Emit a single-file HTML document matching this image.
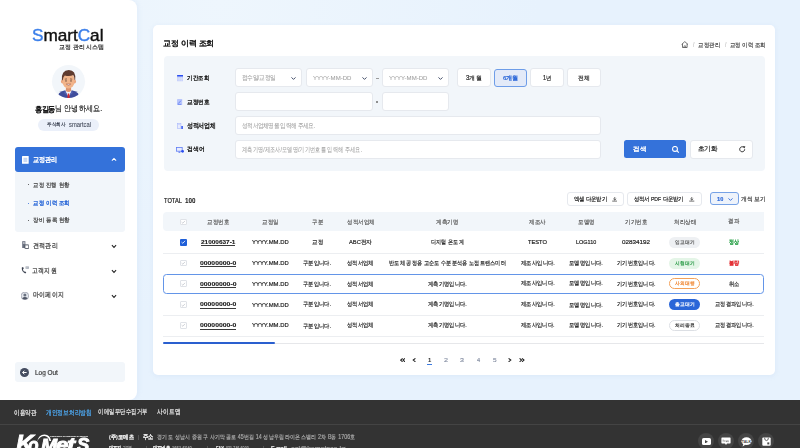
<!DOCTYPE html>
<html><head><meta charset="utf-8">
<style>
*{margin:0;padding:0;box-sizing:border-box}
html,body{width:800px;height:448px;overflow:hidden}
body{background:radial-gradient(circle 320px at 220px 0px,#eef6fd 0%,#e7f2fd 100%) #e7f2fd;font-family:"Liberation Sans",sans-serif;color:#222;position:relative}
.a{position:absolute}
.t{position:absolute;white-space:nowrap;line-height:1;transform-origin:0 0;will-change:transform}
</style></head><body>
<div class="a" style="left:0;top:0;width:137px;height:400px;background:#fff;border-radius:0 8px 8px 0;box-shadow:1px 0 5px rgba(160,190,230,.15)"></div>
<div class="t" style="left:32.35px;top:26.94px;font-size:166.02px;color:#111;font-weight:400;transform:scale(0.10328,0.1);-webkit-text-stroke:4.00px currentColor;"><span style="color:#3b7fea">S</span>mart<span style="color:#3b7fea">C</span>al</div>
<div class="t" style="left:59.26px;top:44.33px;font-size:60.63px;color:#2a2a2a;font-weight:400;transform:scale(0.09836,0.1);-webkit-text-stroke:2.00px currentColor;">교정 관리 시스템</div>
<div class="a" style="left:52.1px;top:64.5px;width:33px;height:33px;border-radius:50%;background:#f2f6fa;overflow:hidden">
<svg width="33" height="33" viewBox="0 0 33 33">
<path d="M5.5 33 L7 28.2 Q9.5 25.8 13.5 25.2 L19.5 25.2 Q23.5 25.8 26 28.2 L27.5 33 Z" fill="#3f4d9c"/>
<path d="M13 25.2 L16.5 32 L20 25.2 Z" fill="#f3f4f8"/>
<path d="M13 25.2 L15.2 30.5 L12.2 28 Z M20 25.2 L17.8 30.5 L20.8 28 Z" fill="#5564b4"/>
<path d="M15.8 28.6 L17.2 28.6 L17.7 33 L15.3 33 Z" fill="#d8282c"/>
<path d="M14 21.5 L19 21.5 L19.2 26 Q16.5 28 13.8 26 Z" fill="#dc9470"/>
<ellipse cx="10.4" cy="16.4" rx="1.4" ry="2" fill="#e9a27a"/>
<ellipse cx="22.6" cy="16.4" rx="1.4" ry="2" fill="#e9a27a"/>
<ellipse cx="16.5" cy="15.8" rx="6.2" ry="7.7" fill="#f1b48a"/>
<path d="M9.9 15.2 Q9 5.2 16.8 4.9 Q24.2 5.1 23.2 14.8 L22.6 15 Q22.4 11.4 21.2 10 Q17.6 11.8 12.8 10.4 Q11.2 11.6 10.7 15.2 Z" fill="#5f3b2f"/>
<path d="M12.8 14.2 L15 13.9 M18 13.9 L20.2 14.2" stroke="#4a2e24" stroke-width="0.6"/>
<circle cx="14" cy="15.9" r="0.65" fill="#3a2a22"/><circle cx="19" cy="15.9" r="0.65" fill="#3a2a22"/>
<path d="M14.3 19.1 Q16.5 21.6 18.7 19.1 Z" fill="#fff" stroke="#8a3a2a" stroke-width="0.45"/>
</svg></div>
<div class="t" style="left:34.58px;top:105.63px;font-size:75.37px;color:#1a1a1a;font-weight:700;transform:scale(0.08978,0.1);-webkit-text-stroke:1.50px currentColor;">홍길동</div>
<div class="t" style="left:55.27px;top:104.17px;font-size:81.81px;color:#222;font-weight:400;transform:scale(0.08800,0.1);-webkit-text-stroke:1.60px currentColor;">님 안녕하세요.</div>
<div class="a" style="left:38px;top:119px;width:61px;height:11.5px;border-radius:6px;background:#ebf0fa"></div>
<div class="t" style="left:47.07px;top:122.38px;font-size:51.23px;color:#3a4152;font-weight:400;transform:scale(0.09060,0.1);-webkit-text-stroke:2.00px currentColor;">주식회사</div>
<div class="t" style="left:68.58px;top:122.21px;font-size:64.78px;color:#3a4152;font-weight:400;transform:scale(0.09023,0.1);-webkit-text-stroke:0.50px currentColor;">smartcal</div>
<div class="a" style="left:14.6px;top:147.3px;width:110px;height:24.4px;background:#3472da;border-radius:3px"></div>
<svg class="a" style="left:21.9px;top:155.9px" width="7" height="8" viewBox="0 0 7 8"><rect x="0" y="0" width="6.7" height="7.85" rx="0.6" fill="#fff"/><rect x="1.4" y="1.6" width="3.9" height="4.6" fill="#dfe8f8"/><path d="M1.6 2.6 H5.1 M1.6 3.9 H5.1 M1.6 5.2 H5.1" stroke="#9db8ea" stroke-width="0.45"/></svg>
<div class="t" style="left:33.12px;top:155.83px;font-size:69.86px;color:#fff;font-weight:700;transform:scale(0.08706,0.1);-webkit-text-stroke:0.60px currentColor;">교정관리</div>
<svg class="a" style="left:110.5px;top:157.3px" width="6" height="5" viewBox="0 0 6 5"><path d="M0.9 3.6 L3 1.4 L5.1 3.6" stroke="#fff" stroke-width="1.05" fill="none"/></svg>
<div class="a" style="left:14.6px;top:171.7px;width:110px;height:60.3px;background:#f2f6fa;border-radius:0 0 3px 3px"></div>
<div class="a" style="left:27.8px;top:184.30px;width:1px;height:1px;border-radius:50%;background:#3a3a3a"></div>
<div class="t" style="left:32.73px;top:181.73px;font-size:63.96px;color:#3a3a3a;font-weight:400;transform:scale(0.08817,0.1);-webkit-text-stroke:2.00px currentColor;">교정 진행 현황</div>
<div class="a" style="left:27.8px;top:202.50px;width:1px;height:1px;border-radius:50%;background:#2f6bd8"></div>
<div class="t" style="left:32.73px;top:199.52px;font-size:64.36px;color:#2f6bd8;font-weight:700;transform:scale(0.08831,0.1);-webkit-text-stroke:0.60px currentColor;">교정 이력 조회</div>
<div class="a" style="left:27.8px;top:219.65px;width:1px;height:1px;border-radius:50%;background:#3a3a3a"></div>
<div class="t" style="left:32.74px;top:216.81px;font-size:63.25px;color:#3a3a3a;font-weight:400;transform:scale(0.08974,0.1);-webkit-text-stroke:2.00px currentColor;">장비 등록 현황</div>
<svg class="a" style="left:21.6px;top:241.2px" width="7" height="8" viewBox="0 0 7 8"><rect x="0.2" y="0.2" width="3.2" height="6.8" fill="#6a7180"/><rect x="0.9" y="1" width="1.8" height="0.5" fill="#fff"/><rect x="0.9" y="2.2" width="1.8" height="0.5" fill="#fff"/><rect x="2.9" y="3.9" width="3.9" height="3.7" rx="0.4" fill="#fff" stroke="#444b58" stroke-width="0.9"/></svg>
<div class="t" style="left:32.80px;top:241.58px;font-size:71.92px;color:#333;font-weight:400;transform:scale(0.08578,0.1);-webkit-text-stroke:2.00px currentColor;">견적관리</div>
<svg class="a" style="left:21.3px;top:266.2px" width="8" height="8" viewBox="0 0 8 8"><path d="M0.8 1.6 Q0.3 5.4 4.2 7.6 L5.3 6.5 L3.9 5.2 L3.1 5.8 Q2 4.6 2 3.3 L2.8 2.6 L2.1 1 Z" fill="#3b4150"/><rect x="4.6" y="0.4" width="3.2" height="2.4" fill="#9aa1ad"/><path d="M5.1 1.2 H7.3 M5.1 2 H6.6" stroke="#fff" stroke-width="0.35"/></svg>
<div class="t" style="left:32.15px;top:266.59px;font-size:73.85px;color:#333;font-weight:400;transform:scale(0.08439,0.1);-webkit-text-stroke:2.00px currentColor;">고객지원</div>
<svg class="a" style="left:21.2px;top:291.6px" width="8" height="8" viewBox="0 0 8 8"><circle cx="3.9" cy="3.9" r="3.8" fill="#e5e8ee" stroke="#6c7382" stroke-width="0.5"/><circle cx="3.9" cy="3.1" r="1.5" fill="#6c7382"/><path d="M1.1 6.2 Q3.9 3.6 6.7 6.2 Q3.9 8.6 1.1 6.2 Z" fill="#4f5666"/></svg>
<div class="t" style="left:33.24px;top:291.36px;font-size:73.28px;color:#333;font-weight:400;transform:scale(0.08479,0.1);-webkit-text-stroke:2.00px currentColor;">마이페이지</div>
<svg class="a" style="left:110.5px;top:243.5px" width="6" height="5" viewBox="0 0 6 5"><path d="M0.9 1.2 L3 3.4 L5.1 1.2" stroke="#222" stroke-width="1.05" fill="none"/></svg>
<svg class="a" style="left:110.5px;top:268.6px" width="6" height="5" viewBox="0 0 6 5"><path d="M0.9 1.2 L3 3.4 L5.1 1.2" stroke="#222" stroke-width="1.05" fill="none"/></svg>
<svg class="a" style="left:110.5px;top:293.8px" width="6" height="5" viewBox="0 0 6 5"><path d="M0.9 1.2 L3 3.4 L5.1 1.2" stroke="#222" stroke-width="1.05" fill="none"/></svg>
<div class="a" style="left:15px;top:362.3px;width:109.5px;height:20.2px;background:#f2f6fa;border-radius:3px"></div>
<svg class="a" style="left:20.1px;top:367.9px" width="9" height="9" viewBox="0 0 9 9"><circle cx="4.5" cy="4.5" r="4.5" fill="#454d60"/><path d="M6.6 4.5 H2.8 M4.4 2.7 L2.6 4.5 L4.4 6.3" stroke="#fff" stroke-width="1" fill="none"/></svg>
<div class="t" style="left:34.92px;top:368.95px;font-size:65.89px;color:#3a3a3a;font-weight:400;transform:scale(0.09745,0.1);-webkit-text-stroke:2.00px currentColor;">Log Out</div>
<div class="a" style="left:153.2px;top:24.7px;width:621.8px;height:350.3px;background:#fff;border-radius:5px;box-shadow:0 1px 5px rgba(160,190,230,.18)"></div>
<div class="t" style="left:163.21px;top:38.52px;font-size:79.07px;color:#111;font-weight:700;transform:scale(0.09908,0.1);-webkit-text-stroke:0.60px currentColor;">교정 이력 조회</div>
<svg class="a" style="left:680.6px;top:41.1px" width="8" height="7" viewBox="0 0 8 7"><path d="M0.6 3.5 L3.8 0.6 L7 3.5 M1.5 2.8 V6.5 H6.1 V2.8" stroke="#444" stroke-width="0.75" fill="none"/><path d="M3 6.5 V4.9 H4.6 V6.5" stroke="#444" stroke-width="0.6" fill="none"/></svg>
<div class="t" style="left:692.71px;top:40.53px;font-size:72.56px;color:#c4c4c4;font-weight:400;transform:scale(0.06829,0.1);-webkit-text-stroke:2.00px currentColor;">/</div>
<div class="t" style="left:698.23px;top:41.65px;font-size:63.18px;color:#4a4a4a;font-weight:400;transform:scale(0.08841,0.1);-webkit-text-stroke:2.00px currentColor;">교정관리</div>
<div class="t" style="left:725.21px;top:40.53px;font-size:72.56px;color:#c4c4c4;font-weight:400;transform:scale(0.06829,0.1);-webkit-text-stroke:2.00px currentColor;">/</div>
<div class="t" style="left:730.45px;top:41.69px;font-size:60.57px;color:#4a4a4a;font-weight:400;transform:scale(0.08847,0.1);-webkit-text-stroke:2.00px currentColor;">교정 이력 조회</div>
<div class="a" style="left:163.5px;top:55.8px;width:601.3px;height:114.8px;background:#f2f6fa;border-radius:4px"></div>
<svg class="a" style="left:176.9px;top:75.4px" width="6.4" height="6.2" viewBox="0 0 6.4 6.2"><rect x="0" y="0" width="6.4" height="6.2" rx="0.5" fill="#c5cffb"/><rect x="0" y="0" width="6.4" height="1.6" rx="0.5" fill="#2c4ff0"/><path d="M0.3 3.4 H6.1 M0.3 4.8 H6.1 M2.1 1.8 V6 M4.3 1.8 V6" stroke="#e6ebfd" stroke-width="0.4"/></svg>
<div class="t" style="left:186.77px;top:75.08px;font-size:64.52px;color:#1e1e1e;font-weight:700;transform:scale(0.08777,0.1);-webkit-text-stroke:0.60px currentColor;">기간조회</div>
<svg class="a" style="left:177.4px;top:98.7px" width="5.2" height="6.2" viewBox="0 0 5.2 6.2"><rect x="0" y="0" width="5.2" height="6.2" rx="0.4" fill="#b9c6fb"/><path d="M1.2 4.6 L3.9 1.7" stroke="#5574f2" stroke-width="0.8"/><rect x="0.9" y="4.9" width="3.4" height="0.7" fill="#5574f2"/></svg>
<div class="t" style="left:187.07px;top:99.19px;font-size:60.56px;color:#1e1e1e;font-weight:700;transform:scale(0.09398,0.1);-webkit-text-stroke:0.60px currentColor;">교정번호</div>
<svg class="a" style="left:176.9px;top:123.1px" width="6.4" height="6" viewBox="0 0 6.4 6"><rect x="0.3" y="0.3" width="3.6" height="5.4" fill="#e8ecfd" stroke="#a9b8fb" stroke-width="0.6"/><rect x="4.2" y="3" width="2.2" height="3" fill="#4d6df2"/><rect x="1.2" y="1.4" width="1.6" height="0.5" fill="#a9b8fb"/></svg>
<div class="t" style="left:186.89px;top:122.23px;font-size:66.11px;color:#1e1e1e;font-weight:700;transform:scale(0.08546,0.1);-webkit-text-stroke:0.60px currentColor;">성적서업체</div>
<svg class="a" style="left:175.7px;top:146.5px" width="8.2" height="6" viewBox="0 0 8.2 6"><rect x="0.4" y="0.4" width="5.8" height="3.8" fill="#e8ecfd" stroke="#5f7cf3" stroke-width="0.8"/><rect x="2.5" y="4.6" width="1.8" height="1.2" fill="#5f7cf3"/><circle cx="6.6" cy="4.3" r="1.4" fill="#2c4ff0"/></svg>
<div class="t" style="left:186.70px;top:146.45px;font-size:60.98px;color:#1e1e1e;font-weight:700;transform:scale(0.09655,0.1);-webkit-text-stroke:0.60px currentColor;">검색어</div>
<div class="a" style="left:235.10px;top:68.40px;width:67.10px;height:18.80px;background:#fff;border:1px solid #e6e9ee;border-radius:3px;"></div>
<div class="t" style="left:242.05px;top:74.60px;font-size:65.41px;color:#a0a0a0;font-weight:400;transform:scale(0.08092,0.1);-webkit-text-stroke:0.60px currentColor;">접수일/교정일</div>
<svg class="a" style="left:291.0px;top:76.5px" width="5" height="3" viewBox="0 0 5 3"><path d="M0.5 0.4 L2.5 2.4 L4.5 0.4" stroke="#2f3a58" stroke-width="0.9" fill="none"/></svg>
<div class="a" style="left:306.30px;top:68.40px;width:66.60px;height:18.80px;background:#fff;border:1px solid #e6e9ee;border-radius:3px;"></div>
<div class="t" style="left:312.94px;top:74.86px;font-size:62.74px;color:#a0a0a0;font-weight:400;transform:scale(0.09656,0.1);-webkit-text-stroke:0.60px currentColor;">YYYY-MM-DD</div>
<svg class="a" style="left:362.0px;top:76.5px" width="5" height="3" viewBox="0 0 5 3"><path d="M0.5 0.4 L2.5 2.4 L4.5 0.4" stroke="#2f3a58" stroke-width="0.9" fill="none"/></svg>
<div class="a" style="left:375.6px;top:77.8px;width:3.2px;height:0.8px;background:#9a9a9a"></div>
<div class="a" style="left:382.30px;top:68.40px;width:66.60px;height:18.80px;background:#fff;border:1px solid #e6e9ee;border-radius:3px;"></div>
<div class="t" style="left:388.95px;top:74.86px;font-size:62.74px;color:#a0a0a0;font-weight:400;transform:scale(0.09653,0.1);-webkit-text-stroke:0.60px currentColor;">YYYY-MM-DD</div>
<svg class="a" style="left:438.0px;top:76.5px" width="5" height="3" viewBox="0 0 5 3"><path d="M0.5 0.4 L2.5 2.4 L4.5 0.4" stroke="#2f3a58" stroke-width="0.9" fill="none"/></svg>
<div class="a" style="left:457.00px;top:68.30px;width:33.50px;height:18.80px;background:#fff;border:1px solid #e6e9ee;border-radius:3px;"></div>
<div class="t" style="left:465.60px;top:75.35px;font-size:63.00px;color:#2a2a2a;font-weight:400;transform:scale(0.09767,0.1);-webkit-text-stroke:2.00px currentColor;">3개월</div>
<div class="a" style="left:493.8px;top:68.8px;width:33px;height:17.8px;background:#e3eaf8;border:1px solid #6e9de8;border-radius:3px"></div>
<div class="t" style="left:503.21px;top:74.50px;font-size:60.31px;color:#2d68d8;font-weight:700;transform:scale(0.10030,0.1);-webkit-text-stroke:0.60px currentColor;">6개월</div>
<div class="a" style="left:530.00px;top:68.30px;width:33.70px;height:18.80px;background:#fff;border:1px solid #e6e9ee;border-radius:3px;"></div>
<div class="t" style="left:543.16px;top:74.57px;font-size:63.20px;color:#2a2a2a;font-weight:400;transform:scale(0.08759,0.1);-webkit-text-stroke:2.00px currentColor;">1년</div>
<div class="a" style="left:567.00px;top:68.30px;width:33.70px;height:18.80px;background:#fff;border:1px solid #e6e9ee;border-radius:3px;"></div>
<div class="t" style="left:577.98px;top:74.59px;font-size:62.94px;color:#2a2a2a;font-weight:400;transform:scale(0.09804,0.1);-webkit-text-stroke:2.00px currentColor;">전체</div>
<div class="a" style="left:235.10px;top:92.00px;width:137.80px;height:19.30px;background:#fff;border:1px solid #e6e9ee;border-radius:3px;"></div>
<div class="a" style="left:376.4px;top:101.2px;width:1.9px;height:1.5px;background:#8f8f8f"></div>
<div class="a" style="left:382.30px;top:92.00px;width:66.60px;height:19.30px;background:#fff;border:1px solid #e6e9ee;border-radius:3px;"></div>
<div class="a" style="left:235.10px;top:116.00px;width:365.60px;height:18.80px;background:#fff;border:1px solid #e6e9ee;border-radius:3px;"></div>
<div class="t" style="left:241.74px;top:123.17px;font-size:65.51px;color:#a0a0a0;font-weight:400;transform:scale(0.08016,0.1);-webkit-text-stroke:0.60px currentColor;">성적서업체명을 입력해 주세요.</div>
<div class="a" style="left:235.10px;top:139.70px;width:365.60px;height:18.90px;background:#fff;border:1px solid #e6e9ee;border-radius:3px;"></div>
<div class="t" style="left:242.28px;top:146.12px;font-size:72.79px;color:#a0a0a0;font-weight:400;transform:scale(0.07268,0.1);-webkit-text-stroke:0.60px currentColor;">계측기명/제조사/모델명/기기번호를 입력해 주세요.</div>
<div class="a" style="left:624.2px;top:140px;width:62.2px;height:18.2px;background:#3472da;border-radius:2.5px"></div>
<div class="t" style="left:632.67px;top:145.80px;font-size:63.18px;color:#fff;font-weight:700;transform:scale(0.10751,0.1);-webkit-text-stroke:0.60px currentColor;">검색</div>
<svg class="a" style="left:672.0px;top:146.3px" width="7.4" height="7" viewBox="0 0 7.4 7"><circle cx="3" cy="2.9" r="2.45" stroke="#fff" stroke-width="1.1" fill="none"/><path d="M4.8 4.7 L6.8 6.6" stroke="#fff" stroke-width="1.1"/></svg>
<div class="a" style="left:690.00px;top:139.50px;width:62.50px;height:19.20px;background:#fff;border:1px solid #e6e9ee;border-radius:3px;"></div>
<div class="t" style="left:698.02px;top:145.47px;font-size:67.60px;color:#222;font-weight:400;transform:scale(0.09404,0.1);-webkit-text-stroke:2.00px currentColor;">초기화</div>
<svg class="a" style="left:738.5px;top:146.4px" width="7" height="6.4" viewBox="0 0 7 6.4"><path d="M5.7 3.3 A2.5 2.5 0 1 1 4.6 1.2" stroke="#222" stroke-width="0.95" fill="none"/><path d="M3.9 0 L6.4 0.6 L5.2 2.6 Z" fill="#222"/></svg>
<div class="t" style="left:164.38px;top:198.49px;font-size:64.90px;color:#222;font-weight:400;transform:scale(0.08832,0.1);-webkit-text-stroke:2.00px currentColor;">TOTAL</div>
<div class="t" style="left:184.78px;top:198.19px;font-size:64.90px;color:#222;font-weight:700;transform:scale(0.09730,0.1);-webkit-text-stroke:0.60px currentColor;">100</div>
<div class="a" style="left:566.70px;top:192.00px;width:57.30px;height:13.50px;background:#fff;border:1px solid #e6e9ee;border-radius:3px;"></div>
<div class="t" style="left:573.67px;top:195.86px;font-size:58.62px;color:#222;font-weight:400;transform:scale(0.08896,0.1);-webkit-text-stroke:2.00px currentColor;">엑셀 다운받기</div>
<svg class="a" style="left:611.5px;top:197.4px" width="5.5" height="4.5" viewBox="0 0 5.5 4.5"><path d="M2.75 0 V3 M1.3 1.7 L2.75 3.1 L4.2 1.7 M0.2 4.1 H5.3" stroke="#333" stroke-width="0.7" fill="none"/></svg>
<div class="a" style="left:627.00px;top:192.00px;width:74.50px;height:13.50px;background:#fff;border:1px solid #e6e9ee;border-radius:3px;"></div>
<div class="t" style="left:633.76px;top:195.61px;font-size:58.55px;color:#222;font-weight:400;transform:scale(0.08746,0.1);-webkit-text-stroke:2.00px currentColor;">성적서 PDF 다운받기</div>
<svg class="a" style="left:689.2px;top:197.4px" width="5.5" height="4.5" viewBox="0 0 5.5 4.5"><path d="M2.75 0 V3 M1.3 1.7 L2.75 3.1 L4.2 1.7 M0.2 4.1 H5.3" stroke="#333" stroke-width="0.7" fill="none"/></svg>
<div class="a" style="left:710px;top:192.2px;width:28.5px;height:13px;background:#eef3fb;border:1px solid #76a2e6;border-radius:3px"></div>
<div class="t" style="left:716.68px;top:195.75px;font-size:62.11px;color:#2d68d8;font-weight:700;transform:scale(0.09309,0.1);-webkit-text-stroke:2.00px currentColor;">10</div>
<svg class="a" style="left:727.5px;top:198.3px" width="5" height="3" viewBox="0 0 5 3"><path d="M0.5 0.4 L2.5 2.4 L4.5 0.4" stroke="#2d68d8" stroke-width="0.9" fill="none"/></svg>
<div class="t" style="left:741.11px;top:195.66px;font-size:59.66px;color:#444;font-weight:400;transform:scale(0.09659,0.1);-webkit-text-stroke:2.00px currentColor;">개씩 보기</div>
<div class="a" style="left:163.3px;top:212px;width:600.7px;height:19.4px;background:#f2f6fa;border-radius:4px 0 0 4px"></div>
<div class="a" style="left:180.00px;top:218.50px;width:6.8px;height:6.8px;background:#fff;border:0.6px solid #dfe2e7;border-radius:1px"></div>
<svg class="a" style="left:181.10px;top:219.80px" width="4.6" height="4.2" viewBox="0 0 4.6 4.2"><path d="M0.6 2.1 L1.8 3.2 L4 0.9" stroke="#a8adb6" stroke-width="0.55" fill="none"/></svg>
<div class="t" style="left:206.79px;top:219.07px;font-size:62.00px;color:#5c5c5c;font-weight:400;transform:scale(0.09000,0.1);-webkit-text-stroke:2.00px currentColor;">교정번호</div>
<div class="t" style="left:262.27px;top:218.69px;font-size:62.00px;color:#5c5c5c;font-weight:400;transform:scale(0.09000,0.1);-webkit-text-stroke:2.00px currentColor;">교정일</div>
<div class="t" style="left:311.99px;top:219.01px;font-size:62.00px;color:#5c5c5c;font-weight:400;transform:scale(0.09000,0.1);-webkit-text-stroke:2.00px currentColor;">구분</div>
<div class="t" style="left:347.05px;top:218.88px;font-size:62.00px;color:#5c5c5c;font-weight:400;transform:scale(0.09000,0.1);-webkit-text-stroke:2.00px currentColor;">성적서업체</div>
<div class="t" style="left:436.35px;top:218.97px;font-size:62.00px;color:#5c5c5c;font-weight:400;transform:scale(0.09000,0.1);-webkit-text-stroke:2.00px currentColor;">계측기명</div>
<div class="t" style="left:529.43px;top:218.69px;font-size:62.00px;color:#5c5c5c;font-weight:400;transform:scale(0.09000,0.1);-webkit-text-stroke:2.00px currentColor;">제조사</div>
<div class="t" style="left:577.94px;top:218.61px;font-size:62.00px;color:#5c5c5c;font-weight:400;transform:scale(0.09000,0.1);-webkit-text-stroke:2.00px currentColor;">모델명</div>
<div class="t" style="left:624.88px;top:219.07px;font-size:62.00px;color:#5c5c5c;font-weight:400;transform:scale(0.09000,0.1);-webkit-text-stroke:2.00px currentColor;">기기번호</div>
<div class="t" style="left:674.21px;top:218.91px;font-size:62.00px;color:#5c5c5c;font-weight:400;transform:scale(0.09000,0.1);-webkit-text-stroke:2.00px currentColor;">처리상태</div>
<div class="t" style="left:728.46px;top:218.30px;font-size:62.00px;color:#5c5c5c;font-weight:400;transform:scale(0.09000,0.1);-webkit-text-stroke:2.00px currentColor;">결과</div>
<div class="a" style="left:163.3px;top:252.5px;width:600.7px;height:0.7px;background:#eceef1"></div>
<div class="a" style="left:163.3px;top:314.9px;width:600.7px;height:0.7px;background:#eceef1"></div>
<div class="a" style="left:163.3px;top:335.6px;width:600.7px;height:0.7px;background:#eceef1"></div>
<div class="a" style="left:163.3px;top:273.5px;width:600.7px;height:20.4px;border:1px solid #6395e8;border-radius:3.5px"></div>
<div class="a" style="left:180.00px;top:239.30px;width:6.8px;height:6.4px;background:#1f5fd8;border-radius:1px"></div>
<svg class="a" style="left:181.10px;top:240.30px" width="4.6" height="4.2" viewBox="0 0 4.6 4.2"><path d="M0.5 2.1 L1.8 3.3 L4.1 0.8" stroke="#fff" stroke-width="0.8" fill="none"/></svg>
<div class="t" style="left:201.31px;top:239.42px;font-size:60.91px;color:#1a1a1a;font-weight:600;transform:scale(0.10580,0.1);-webkit-text-stroke:1.20px currentColor;">21000637-1</div>
<div class="a" style="left:200.88px;top:245.40px;width:34.25px;height:0.55px;background:#3a3a3a"></div>
<div class="t" style="left:251.68px;top:239.32px;font-size:62.67px;color:#222;font-weight:400;transform:scale(0.09451,0.1);-webkit-text-stroke:2.00px currentColor;">YYYY.MM.DD</div>
<div class="t" style="left:311.88px;top:239.19px;font-size:62.00px;color:#2a2a2a;font-weight:400;transform:scale(0.08998,0.1);-webkit-text-stroke:2.00px currentColor;">교정</div>
<div class="t" style="left:349.02px;top:239.16px;font-size:62.00px;color:#2a2a2a;font-weight:400;transform:scale(0.09231,0.1);-webkit-text-stroke:2.00px currentColor;">ABC전자</div>
<div class="t" style="left:430.93px;top:239.13px;font-size:62.00px;color:#2a2a2a;font-weight:400;transform:scale(0.08418,0.1);-webkit-text-stroke:2.00px currentColor;">디지털 온도계</div>
<div class="t" style="left:528.07px;top:238.98px;font-size:60.91px;color:#222;font-weight:400;transform:scale(0.09336,0.1);-webkit-text-stroke:2.00px currentColor;">TESTO</div>
<div class="t" style="left:575.74px;top:239.42px;font-size:60.91px;color:#222;font-weight:400;transform:scale(0.08949,0.1);-webkit-text-stroke:2.00px currentColor;">LOG110</div>
<div class="t" style="left:621.94px;top:239.42px;font-size:60.91px;color:#222;font-weight:400;transform:scale(0.10319,0.1);-webkit-text-stroke:2.00px currentColor;">02834192</div>
<div class="a" style="left:669.40px;top:237.10px;width:30.4px;height:10.8px;border-radius:5.4px;background:#eef0f3;"></div>
<div class="t" style="left:674.84px;top:239.40px;font-size:54.00px;color:#555;font-weight:400;transform:scale(0.09481,0.1);-webkit-text-stroke:2.00px currentColor;">입고대기</div>
<div class="t" style="left:729.04px;top:238.85px;font-size:62.00px;color:#2ca24a;font-weight:700;transform:scale(0.08311,0.1);-webkit-text-stroke:0.60px currentColor;">정상</div>
<div class="a" style="left:180.00px;top:259.70px;width:6.8px;height:6.8px;background:#fff;border:0.6px solid #dfe2e7;border-radius:1px"></div>
<svg class="a" style="left:181.10px;top:261.00px" width="4.6" height="4.2" viewBox="0 0 4.6 4.2"><path d="M0.6 2.1 L1.8 3.2 L4 0.9" stroke="#a8adb6" stroke-width="0.55" fill="none"/></svg>
<div class="t" style="left:199.62px;top:259.66px;font-size:60.91px;color:#1a1a1a;font-weight:600;transform:scale(0.11191,0.1);-webkit-text-stroke:1.20px currentColor;">00000000-0</div>
<div class="a" style="left:199.75px;top:266.10px;width:36.50px;height:0.55px;background:#3a3a3a"></div>
<div class="t" style="left:251.68px;top:260.12px;font-size:62.67px;color:#222;font-weight:400;transform:scale(0.09451,0.1);-webkit-text-stroke:2.00px currentColor;">YYYY.MM.DD</div>
<div class="t" style="left:303.15px;top:259.64px;font-size:62.00px;color:#2a2a2a;font-weight:400;transform:scale(0.08648,0.1);-webkit-text-stroke:2.00px currentColor;">구분입니다.</div>
<div class="t" style="left:346.94px;top:260.02px;font-size:62.00px;color:#2a2a2a;font-weight:400;transform:scale(0.08651,0.1);-webkit-text-stroke:2.00px currentColor;">성적서업체</div>
<div class="t" style="left:389.04px;top:259.99px;font-size:62.00px;color:#2a2a2a;font-weight:400;transform:scale(0.08536,0.1);-webkit-text-stroke:2.00px currentColor;">반도체 공정용 고순도 수분분석용 노점트랜스미터</div>
<div class="t" style="left:520.69px;top:260.19px;font-size:62.00px;color:#2a2a2a;font-weight:400;transform:scale(0.08681,0.1);-webkit-text-stroke:2.00px currentColor;">제조사입니다.</div>
<div class="t" style="left:568.91px;top:260.14px;font-size:62.00px;color:#2a2a2a;font-weight:400;transform:scale(0.08702,0.1);-webkit-text-stroke:2.00px currentColor;">모델명입니다.</div>
<div class="t" style="left:616.71px;top:259.62px;font-size:62.00px;color:#2a2a2a;font-weight:400;transform:scale(0.08516,0.1);-webkit-text-stroke:2.00px currentColor;">기기번호입니다.</div>
<div class="a" style="left:669.40px;top:257.80px;width:30.4px;height:10.8px;border-radius:5.4px;background:#e4f5e7;"></div>
<div class="t" style="left:675.15px;top:259.50px;font-size:54.00px;color:#2a9a46;font-weight:400;transform:scale(0.09478,0.1);-webkit-text-stroke:2.00px currentColor;">시험대기</div>
<div class="t" style="left:729.04px;top:259.61px;font-size:62.00px;color:#e2262b;font-weight:700;transform:scale(0.08462,0.1);-webkit-text-stroke:0.60px currentColor;">불량</div>
<div class="a" style="left:180.00px;top:280.30px;width:6.8px;height:6.8px;background:#fff;border:0.6px solid #dfe2e7;border-radius:1px"></div>
<svg class="a" style="left:181.10px;top:281.60px" width="4.6" height="4.2" viewBox="0 0 4.6 4.2"><path d="M0.6 2.1 L1.8 3.2 L4 0.9" stroke="#a8adb6" stroke-width="0.55" fill="none"/></svg>
<div class="t" style="left:199.77px;top:280.50px;font-size:60.91px;color:#1a1a1a;font-weight:600;transform:scale(0.11211,0.1);-webkit-text-stroke:1.20px currentColor;">00000000-0</div>
<div class="a" style="left:199.75px;top:286.70px;width:36.50px;height:0.55px;background:#3a3a3a"></div>
<div class="t" style="left:251.68px;top:280.52px;font-size:62.67px;color:#222;font-weight:400;transform:scale(0.09451,0.1);-webkit-text-stroke:2.00px currentColor;">YYYY.MM.DD</div>
<div class="t" style="left:303.05px;top:280.60px;font-size:62.00px;color:#2a2a2a;font-weight:400;transform:scale(0.08534,0.1);-webkit-text-stroke:2.00px currentColor;">구분입니다.</div>
<div class="t" style="left:346.94px;top:280.51px;font-size:62.00px;color:#2a2a2a;font-weight:400;transform:scale(0.08649,0.1);-webkit-text-stroke:2.00px currentColor;">성적서업체</div>
<div class="t" style="left:428.16px;top:280.69px;font-size:62.00px;color:#2a2a2a;font-weight:400;transform:scale(0.08560,0.1);-webkit-text-stroke:2.00px currentColor;">계측기명입니다.</div>
<div class="t" style="left:520.84px;top:280.24px;font-size:62.00px;color:#2a2a2a;font-weight:400;transform:scale(0.08639,0.1);-webkit-text-stroke:2.00px currentColor;">제조사입니다.</div>
<div class="t" style="left:568.91px;top:280.26px;font-size:62.00px;color:#2a2a2a;font-weight:400;transform:scale(0.08702,0.1);-webkit-text-stroke:2.00px currentColor;">모델명입니다.</div>
<div class="t" style="left:616.71px;top:281.02px;font-size:62.00px;color:#2a2a2a;font-weight:400;transform:scale(0.08516,0.1);-webkit-text-stroke:2.00px currentColor;">기기번호입니다.</div>
<div class="a" style="left:669.40px;top:278.40px;width:30.4px;height:10.8px;border-radius:5.4px;background:#fff;border:0.8px solid #f3a15a;"></div>
<div class="t" style="left:675.24px;top:280.30px;font-size:54.00px;color:#ee7d22;font-weight:400;transform:scale(0.09453,0.1);-webkit-text-stroke:2.00px currentColor;">사외대행</div>
<div class="t" style="left:728.73px;top:280.64px;font-size:62.00px;color:#333;font-weight:400;transform:scale(0.08813,0.1);-webkit-text-stroke:2.00px currentColor;">취소</div>
<div class="a" style="left:180.00px;top:301.20px;width:6.8px;height:6.8px;background:#fff;border:0.6px solid #dfe2e7;border-radius:1px"></div>
<svg class="a" style="left:181.10px;top:302.50px" width="4.6" height="4.2" viewBox="0 0 4.6 4.2"><path d="M0.6 2.1 L1.8 3.2 L4 0.9" stroke="#a8adb6" stroke-width="0.55" fill="none"/></svg>
<div class="t" style="left:199.62px;top:301.46px;font-size:60.91px;color:#1a1a1a;font-weight:600;transform:scale(0.11190,0.1);-webkit-text-stroke:1.20px currentColor;">00000000-0</div>
<div class="a" style="left:199.75px;top:307.60px;width:36.50px;height:0.55px;background:#3a3a3a"></div>
<div class="t" style="left:251.80px;top:301.60px;font-size:62.67px;color:#222;font-weight:400;transform:scale(0.09473,0.1);-webkit-text-stroke:2.00px currentColor;">YYYY.MM.DD</div>
<div class="t" style="left:303.15px;top:301.14px;font-size:62.00px;color:#2a2a2a;font-weight:400;transform:scale(0.08648,0.1);-webkit-text-stroke:2.00px currentColor;">구분입니다.</div>
<div class="t" style="left:346.95px;top:301.23px;font-size:62.00px;color:#2a2a2a;font-weight:400;transform:scale(0.08647,0.1);-webkit-text-stroke:2.00px currentColor;">성적서업체</div>
<div class="t" style="left:428.16px;top:301.39px;font-size:62.00px;color:#2a2a2a;font-weight:400;transform:scale(0.08560,0.1);-webkit-text-stroke:2.00px currentColor;">계측기명입니다.</div>
<div class="t" style="left:520.84px;top:300.94px;font-size:62.00px;color:#2a2a2a;font-weight:400;transform:scale(0.08639,0.1);-webkit-text-stroke:2.00px currentColor;">제조사입니다.</div>
<div class="t" style="left:568.91px;top:301.64px;font-size:62.00px;color:#2a2a2a;font-weight:400;transform:scale(0.08702,0.1);-webkit-text-stroke:2.00px currentColor;">모델명입니다.</div>
<div class="t" style="left:616.92px;top:301.38px;font-size:62.00px;color:#2a2a2a;font-weight:400;transform:scale(0.08477,0.1);-webkit-text-stroke:2.00px currentColor;">기기번호입니다.</div>
<div class="a" style="left:669.40px;top:299.30px;width:30.4px;height:10.8px;border-radius:5.4px;background:#2a66d8;"></div>
<div class="t" style="left:675.19px;top:301.13px;font-size:54.00px;color:#fff;font-weight:400;transform:scale(0.09553,0.1);-webkit-text-stroke:2.00px currentColor;">출고대기</div>
<div class="t" style="left:714.61px;top:301.24px;font-size:62.00px;color:#333;font-weight:400;transform:scale(0.08579,0.1);-webkit-text-stroke:2.00px currentColor;">교정결과입니다.</div>
<div class="a" style="left:180.00px;top:322.10px;width:6.8px;height:6.8px;background:#fff;border:0.6px solid #dfe2e7;border-radius:1px"></div>
<svg class="a" style="left:181.10px;top:323.40px" width="4.6" height="4.2" viewBox="0 0 4.6 4.2"><path d="M0.6 2.1 L1.8 3.2 L4 0.9" stroke="#a8adb6" stroke-width="0.55" fill="none"/></svg>
<div class="t" style="left:199.62px;top:322.38px;font-size:60.91px;color:#1a1a1a;font-weight:600;transform:scale(0.11190,0.1);-webkit-text-stroke:1.20px currentColor;">00000000-0</div>
<div class="a" style="left:199.75px;top:328.50px;width:36.50px;height:0.55px;background:#3a3a3a"></div>
<div class="t" style="left:251.68px;top:321.72px;font-size:62.67px;color:#222;font-weight:400;transform:scale(0.09450,0.1);-webkit-text-stroke:2.00px currentColor;">YYYY.MM.DD</div>
<div class="t" style="left:303.15px;top:322.84px;font-size:62.00px;color:#2a2a2a;font-weight:400;transform:scale(0.08648,0.1);-webkit-text-stroke:2.00px currentColor;">구분입니다.</div>
<div class="t" style="left:346.95px;top:322.15px;font-size:62.00px;color:#2a2a2a;font-weight:400;transform:scale(0.08647,0.1);-webkit-text-stroke:2.00px currentColor;">성적서업체</div>
<div class="t" style="left:428.16px;top:322.09px;font-size:62.00px;color:#2a2a2a;font-weight:400;transform:scale(0.08560,0.1);-webkit-text-stroke:2.00px currentColor;">계측기명입니다.</div>
<div class="t" style="left:520.76px;top:321.92px;font-size:62.00px;color:#2a2a2a;font-weight:400;transform:scale(0.08576,0.1);-webkit-text-stroke:2.00px currentColor;">제조사입니다.</div>
<div class="t" style="left:568.65px;top:322.27px;font-size:62.00px;color:#2a2a2a;font-weight:400;transform:scale(0.08728,0.1);-webkit-text-stroke:2.00px currentColor;">모델명입니다.</div>
<div class="t" style="left:616.71px;top:322.22px;font-size:62.00px;color:#2a2a2a;font-weight:400;transform:scale(0.08516,0.1);-webkit-text-stroke:2.00px currentColor;">기기번호입니다.</div>
<div class="a" style="left:669.40px;top:320.20px;width:30.4px;height:10.8px;border-radius:5.4px;background:#fff;border:0.7px solid #dcdfe4;"></div>
<div class="t" style="left:674.93px;top:322.26px;font-size:54.00px;color:#333;font-weight:400;transform:scale(0.09537,0.1);-webkit-text-stroke:2.00px currentColor;">처리종료</div>
<div class="t" style="left:714.61px;top:321.84px;font-size:62.00px;color:#333;font-weight:400;transform:scale(0.08579,0.1);-webkit-text-stroke:2.00px currentColor;">교정결과입니다.</div>
<div class="a" style="left:163.3px;top:342.6px;width:600.7px;height:1.1px;background:#e6e7ea"></div>
<div class="a" style="left:163.3px;top:342.4px;width:112.2px;height:1.5px;background:#2a5fcf;border-radius:1px"></div>
<svg class="a" style="left:399.7px;top:357.9px" width="5.6" height="4.2" viewBox="0 0 5.6 4.2"><path d="M2.6 0.4 L0.6 2.1 L2.6 3.8 M5 0.4 L3 2.1 L5 3.8" stroke="#1a1a1a" stroke-width="1.05" fill="none"/></svg>
<svg class="a" style="left:412.4px;top:357.9px" width="4" height="4.2" viewBox="0 0 4 4.2"><path d="M3.4 0.4 L1.2 2.1 L3.4 3.8" stroke="#1a1a1a" stroke-width="1.05" fill="none"/></svg>
<svg class="a" style="left:508.3px;top:357.9px" width="4" height="4.2" viewBox="0 0 4 4.2"><path d="M0.6 0.4 L2.8 2.1 L0.6 3.8" stroke="#1a1a1a" stroke-width="1.05" fill="none"/></svg>
<svg class="a" style="left:519.2px;top:357.9px" width="5.6" height="4.2" viewBox="0 0 5.6 4.2"><path d="M0.6 0.4 L2.6 2.1 L0.6 3.8 M3 0.4 L5 2.1 L3 3.8" stroke="#1a1a1a" stroke-width="1.05" fill="none"/></svg>
<div class="t" style="left:428.08px;top:356.65px;font-size:60.91px;color:#333;font-weight:700;transform:scale(0.09559,0.1);-webkit-text-stroke:0.60px currentColor;">1</div>
<div class="a" style="left:426.9px;top:364.3px;width:5.2px;height:0.9px;background:#3d7be0"></div>
<div class="t" style="left:443.99px;top:356.72px;font-size:60.04px;color:#8c95a8;font-weight:400;transform:scale(0.12108,0.1);-webkit-text-stroke:2.00px currentColor;">2</div>
<div class="t" style="left:460.16px;top:356.73px;font-size:59.19px;color:#8c95a8;font-weight:400;transform:scale(0.12026,0.1);-webkit-text-stroke:2.00px currentColor;">3</div>
<div class="t" style="left:477.31px;top:356.50px;font-size:60.04px;color:#8c95a8;font-weight:400;transform:scale(0.09481,0.1);-webkit-text-stroke:2.00px currentColor;">4</div>
<div class="t" style="left:493.19px;top:356.56px;font-size:60.04px;color:#8c95a8;font-weight:400;transform:scale(0.10866,0.1);-webkit-text-stroke:2.00px currentColor;">5</div>
<div class="a" style="left:0;top:400px;width:800px;height:48px;background:#333333"></div>
<div class="a" style="left:0;top:424.2px;width:800px;height:0.8px;background:#444"></div>
<div class="t" style="left:14.35px;top:408.76px;font-size:71.86px;color:#ececec;font-weight:400;transform:scale(0.07857,0.1);-webkit-text-stroke:2.00px currentColor;">이용약관</div>
<div class="t" style="left:45.80px;top:408.54px;font-size:71.28px;color:#4ea8f0;font-weight:400;transform:scale(0.08088,0.1);-webkit-text-stroke:2.50px currentColor;">개인정보처리방침</div>
<div class="t" style="left:98.39px;top:408.37px;font-size:75.19px;color:#ececec;font-weight:400;transform:scale(0.07390,0.1);-webkit-text-stroke:2.00px currentColor;">이메일무단수집거부</div>
<div class="t" style="left:157.05px;top:408.26px;font-size:74.90px;color:#ececec;font-weight:400;transform:scale(0.07912,0.1);-webkit-text-stroke:2.00px currentColor;">사이트맵</div>
<svg class="a" style="left:36px;top:432.5px" width="16" height="9" viewBox="0 0 16 9">
<path d="M1 8.5 Q2.8 1.3 8.5 1.4 Q14.2 1.5 15.2 8 L13.4 8 Q12.4 3.4 8.5 3.1 Q4.2 3.1 1 8.5 Z" fill="#fff"/>
</svg>
<div class="t" style="left:16.01px;top:431.06px;font-size:246.38px;color:#fff;font-weight:700;transform:scale(0.09880,0.1);font-style:italic;-webkit-text-stroke:9.00px currentColor;">K</div>
<div class="t" style="left:28.48px;top:433.52px;font-size:209.09px;color:#fff;font-weight:700;transform:scale(0.08261,0.1);font-style:italic;-webkit-text-stroke:9.00px currentColor;">o</div>
<div class="t" style="left:41.11px;top:435.99px;font-size:188.41px;color:#fff;font-weight:700;transform:scale(0.10232,0.1);font-style:italic;-webkit-text-stroke:9.00px currentColor;">M</div>
<div class="t" style="left:56.34px;top:435.08px;font-size:190.91px;color:#fff;font-weight:700;transform:scale(0.11524,0.1);font-style:italic;-webkit-text-stroke:9.00px currentColor;">e</div>
<div class="t" style="left:67.03px;top:435.46px;font-size:186.57px;color:#fff;font-weight:700;transform:scale(0.12994,0.1);font-style:italic;-webkit-text-stroke:9.00px currentColor;">t</div>
<div class="t" style="left:76.82px;top:436.25px;font-size:183.10px;color:#fff;font-weight:700;transform:scale(0.10083,0.1);font-style:italic;-webkit-text-stroke:9.00px currentColor;">S</div>
<div class="t" style="left:50.30px;top:436.28px;font-size:18.09px;color:#d0d0d0;font-weight:400;transform:scale(0.13824,0.1);-webkit-text-stroke:1.50px currentColor;">Laboratory of Metrology &amp; Service</div>
<div class="t" style="left:108.93px;top:434.24px;font-size:61.50px;color:#e8e8e8;font-weight:400;transform:scale(0.08596,0.1);-webkit-text-stroke:2.00px currentColor;"><b>(주)코메츠</b></div>
<div class="a" style="left:138.4px;top:434.8px;width:0.6px;height:5.5px;background:#555"></div>
<div class="t" style="left:142.66px;top:433.08px;font-size:71.30px;color:#e8e8e8;font-weight:400;transform:scale(0.07425,0.1);-webkit-text-stroke:2.00px currentColor;"><b>주소</b></div>
<div class="t" style="left:156.64px;top:433.05px;font-size:65.00px;color:#a8a8a8;font-weight:400;transform:scale(0.08216,0.1);-webkit-text-stroke:2.00px currentColor;">경기도 성남시 중원구 사기막골로 45번길 14 성남우림라이온스밸리 2차 B동 1706호</div>
<div class="t" style="left:109.38px;top:444.59px;font-size:68.00px;color:#e8e8e8;font-weight:400;transform:scale(0.05962,0.1);-webkit-text-stroke:2.00px currentColor;"><b>대표자</b></div>
<div class="t" style="left:123.34px;top:444.56px;font-size:68.00px;color:#a8a8a8;font-weight:400;transform:scale(0.04274,0.1);-webkit-text-stroke:2.00px currentColor;">김명화</div>
<div class="a" style="left:146px;top:445.6px;width:0.6px;height:5.5px;background:#555"></div>
<div class="t" style="left:152.87px;top:444.59px;font-size:68.00px;color:#e8e8e8;font-weight:400;transform:scale(0.06243,0.1);-webkit-text-stroke:2.00px currentColor;"><b>대표번호</b></div>
<div class="t" style="left:172.31px;top:444.87px;font-size:68.00px;color:#a8a8a8;font-weight:400;transform:scale(0.06109,0.1);-webkit-text-stroke:2.00px currentColor;">1661-6040</div>
<div class="a" style="left:207px;top:445.6px;width:0.6px;height:5.5px;background:#555"></div>
<div class="t" style="left:215.76px;top:444.87px;font-size:68.00px;color:#e8e8e8;font-weight:400;transform:scale(0.05977,0.1);-webkit-text-stroke:2.00px currentColor;"><b>FAX</b></div>
<div class="t" style="left:226.45px;top:444.87px;font-size:68.00px;color:#a8a8a8;font-weight:400;transform:scale(0.05356,0.1);-webkit-text-stroke:2.00px currentColor;">031-746-6000</div>
<div class="a" style="left:263px;top:445.6px;width:0.6px;height:5.5px;background:#555"></div>
<div class="t" style="left:271.39px;top:444.97px;font-size:68.00px;color:#e8e8e8;font-weight:400;transform:scale(0.07686,0.1);-webkit-text-stroke:2.00px currentColor;"><b>E-mail</b></div>
<div class="t" style="left:290.72px;top:444.56px;font-size:68.00px;color:#a8a8a8;font-weight:400;transform:scale(0.10408,0.1);-webkit-text-stroke:2.00px currentColor;">esl@kometsco.kr</div>
<div class="a" style="left:697.90px;top:432.9px;width:16.6px;height:16.6px;border-radius:50%;background:#454545"></div>
<div class="a" style="left:717.60px;top:432.9px;width:16.6px;height:16.6px;border-radius:50%;background:#454545"></div>
<div class="a" style="left:737.70px;top:432.9px;width:16.6px;height:16.6px;border-radius:50%;background:#454545"></div>
<div class="a" style="left:757.90px;top:432.9px;width:16.6px;height:16.6px;border-radius:50%;background:#454545"></div>
<div class="a" style="left:701.6px;top:438.3px;width:9.2px;height:6.4px;border-radius:1.6px;background:#fff"></div><svg class="a" style="left:704.9px;top:439.8px" width="3" height="3.4" viewBox="0 0 3 3.4"><path d="M0 0 L3 1.7 L0 3.4 Z" fill="#454545"/></svg>
<svg class="a" style="left:720.9px;top:437.2px" width="10" height="9" viewBox="0 0 10 9"><path d="M1 0.6 H9 Q9.6 0.6 9.6 1.2 V5.8 Q9.6 6.4 9 6.4 H6 L5 8 L4 6.4 H1 Q0.4 6.4 0.4 5.8 V1.2 Q0.4 0.6 1 0.6 Z" fill="#fff"/><path d="M2.2 2.6 V4.6 M3.6 3.4 V4.6 M5 3.4 V4.6 H6.2 V3.4 M7.2 3.4 V5.2" stroke="#454545" stroke-width="0.55" fill="none"/></svg>
<svg class="a" style="left:740.6px;top:436.6px" width="11" height="10" viewBox="0 0 11 10"><ellipse cx="5.5" cy="4.2" rx="5" ry="3.9" fill="#fff"/><path d="M2.4 6.8 L1.6 9.4 L4.6 7.6 Z" fill="#fff"/><text x="5.5" y="5.6" font-size="3.6" font-weight="bold" text-anchor="middle" fill="#454545" font-family="Liberation Sans">TALK</text></svg>
<svg class="a" style="left:761.6px;top:436.2px" width="9" height="10" viewBox="0 0 9 10"><rect x="0.3" y="1.6" width="8.4" height="8.2" rx="1" fill="#fff"/><path d="M2.6 1.8 Q2.6 4.6 4.5 4.6 Q6.4 4.6 6.4 1.8" stroke="#454545" stroke-width="0.8" fill="none"/><rect x="5.3" y="6.4" width="2" height="2" fill="#454545"/></svg>
</body></html>
